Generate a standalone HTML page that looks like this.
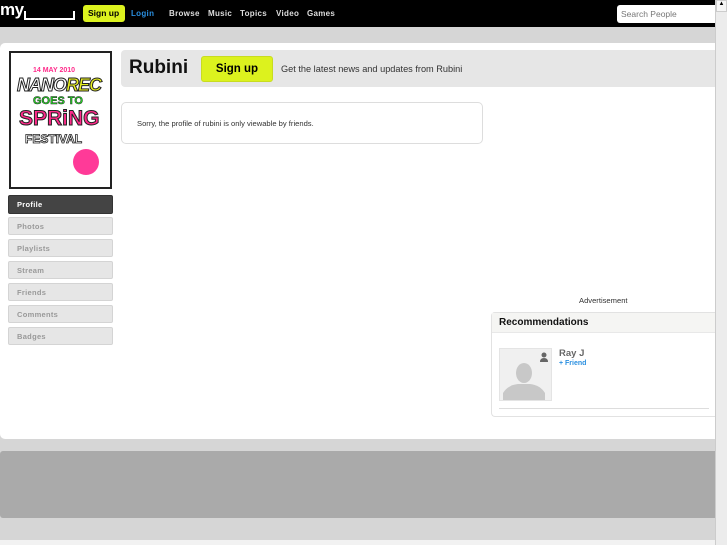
<!DOCTYPE html>
<html><head><style>
*{margin:0;padding:0;box-sizing:border-box}
body{width:727px;height:545px;overflow:hidden;background:#d6d6d6;font-family:"Liberation Sans",sans-serif;position:relative}
.abs{position:absolute}
#hdr{left:0;top:0;width:715px;height:27px;background:#000}
.nav{color:#ddd;font-size:8px;font-weight:bold;top:9px;letter-spacing:.3px}
#main{left:0;top:43px;width:715px;height:396px;background:#fff;border-radius:5px 0 0 5px}
.tab{left:8px;width:105px;height:18px;background:#e6e6e6;border:1px solid #d4d4d4;border-radius:2px;font-size:7.5px;color:#999;padding:4px 0 0 8px;font-weight:bold;letter-spacing:.3px}
</style></head><body>
<div id="hdr" class="abs"></div>
<div class="abs" style="left:0;top:0;color:#fff;font-size:17px;font-weight:bold;letter-spacing:-0.5px">my</div>
<div class="abs" style="left:24px;top:11px;width:51px;height:9px;border:2px solid #fff;border-top:none"></div>
<div class="abs" style="left:83px;top:5px;width:42px;height:17px;background:#dcf21e;border-radius:3px;font-size:8.5px;font-weight:bold;padding:3px 0 0 5px">Sign up</div>
<div class="abs nav" style="left:131px;color:#2a8fe0">Login</div>
<div class="abs nav" style="left:169px">Browse</div>
<div class="abs nav" style="left:208px">Music</div>
<div class="abs nav" style="left:240px">Topics</div>
<div class="abs nav" style="left:276px">Video</div>
<div class="abs nav" style="left:307px">Games</div>
<div class="abs" style="left:617px;top:5px;width:98px;height:18px;background:#fff;border-radius:3px 0 0 3px;font-size:8.5px;color:#777;padding:4px 0 0 4px">Search People</div>
<div class="abs" style="left:715px;top:0;width:12px;height:545px;background:#ececec;border-left:1px solid #ccc"></div>
<div class="abs" style="left:716px;top:0;width:11px;height:12px;background:#f6f6f6;border:1px solid #ccc;font-size:6px;text-align:center">▲</div>

<div id="main" class="abs"></div>
<div class="abs" style="left:9px;top:51px;width:103px;height:138px;border:2px solid #222;background:#fff;overflow:hidden">
<div style="position:absolute;left:22px;top:14px;color:#ff2a8a;font-size:7px;font-weight:bold">14 MAY 2010</div>
<div style="position:absolute;left:6px;top:22px;color:#fff;font-size:18px;font-weight:bold;font-style:italic;-webkit-text-stroke:1px #222;letter-spacing:-1px">NANO<span style="color:#e8f020">REC</span></div>
<div style="position:absolute;left:22px;top:42px;color:#22dd22;font-size:11px;font-weight:bold;-webkit-text-stroke:.5px #222">GOES TO</div>
<div style="position:absolute;left:8px;top:54px;color:#ff2a8a;font-size:21px;font-weight:bold;-webkit-text-stroke:1px #222">SPRiNG</div>
<div style="position:absolute;left:14px;top:79px;color:#fff;font-size:12px;font-weight:bold;-webkit-text-stroke:.8px #222">FESTIVAL</div>
<div style="position:absolute;left:62px;top:96px;width:26px;height:26px;background:#ff3a98;border-radius:50%"></div>
</div>
<div class="abs tab" style="top:195px;height:19px;background:#444;border-color:#333;color:#fff">Profile</div>
<div class="abs tab" style="top:217px">Photos</div>
<div class="abs tab" style="top:239px">Playlists</div>
<div class="abs tab" style="top:261px">Stream</div>
<div class="abs tab" style="top:283px">Friends</div>
<div class="abs tab" style="top:305px">Comments</div>
<div class="abs tab" style="top:327px">Badges</div>

<div class="abs" style="left:121px;top:50px;width:594px;height:37px;background:#e6e6e6;border-radius:4px 0 0 4px"></div>
<div class="abs" style="left:129px;top:57px;font-size:19px;font-weight:bold;color:#111">Rubini</div>
<div class="abs" style="left:201px;top:56px;width:72px;height:26px;background:#dcf21e;border:1px solid #c8dc20;border-radius:3px;font-size:11.5px;font-weight:bold;text-align:center;padding-top:6px">Sign up</div>
<div class="abs" style="left:281px;top:64px;font-size:9.2px;color:#333">Get the latest news and updates from Rubini</div>
<div class="abs" style="left:121px;top:102px;width:362px;height:42px;border:1px solid #ddd;border-radius:5px"></div>
<div class="abs" style="left:137px;top:119px;font-size:7.6px;color:#333">Sorry, the profile of rubini is only viewable by friends.</div>

<div class="abs" style="left:579px;top:296px;font-size:7.6px;color:#333">Advertisement</div>
<div class="abs" style="left:491px;top:312px;width:224px;height:105px;border:1px solid #e2e2e2;border-right:none;border-radius:4px 0 0 4px"></div>
<div class="abs" style="left:492px;top:313px;width:223px;height:20px;background:#f5f5f3;border-bottom:1px solid #e8e8e8"></div>
<div class="abs" style="left:499px;top:317px;font-size:10px;font-weight:bold;color:#111">Recommendations</div>
<div class="abs" style="left:499px;top:348px;width:53px;height:53px;background:#f0f0f0;border:1px solid #e4e4e4;overflow:hidden">
<svg width="53" height="53"><ellipse cx="24" cy="24" rx="8" ry="10" fill="#c8c8c8"/><path d="M3 53 L3 44 Q8 36 18 35 L30 35 Q40 36 45 44 L45 53Z" fill="#c8c8c8"/><circle cx="44" cy="6" r="2.5" fill="#666"/><path d="M40 13 Q40 9 44 9 Q48 9 48 13Z" fill="#666"/></svg></div>
<div class="abs" style="left:559px;top:348px;font-size:9.5px;font-weight:bold;color:#666">Ray J</div>
<div class="abs" style="left:559px;top:360px;font-size:7px;font-weight:bold;color:#2a8fe0">+ Friend</div>
<div class="abs" style="left:499px;top:408px;width:210px;height:1px;background:#ddd"></div>

<div class="abs" style="left:0;top:451px;width:715px;height:67px;background:#aaa;border-radius:3px 0 0 3px"></div>
<div class="abs" style="left:0;top:540px;width:715px;height:5px;background:#f2f2f2"></div>
</body></html>
